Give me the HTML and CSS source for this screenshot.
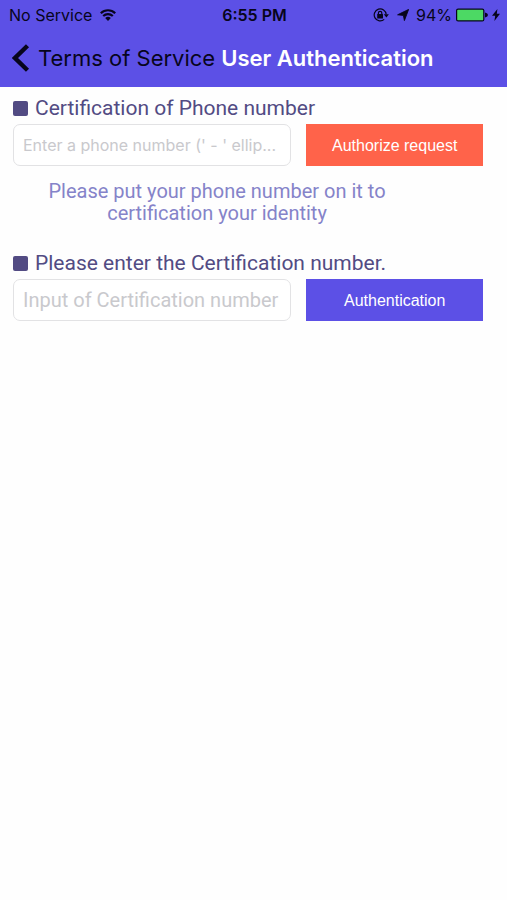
FILE: index.html
```html
<!DOCTYPE html>
<html lang="en">
<head>
<meta charset="utf-8">
<meta name="viewport" content="width=device-width, initial-scale=1">
<title>User Authentication</title>
<link rel="stylesheet" href="styles.css">
</head>
<body>
<header class="top">
  <div class="status">
    <div class="status-left">
      <span>No Service</span>
      <svg class="wifi" viewBox="0 0 16 12" aria-hidden="true">
        <path d="M.8 4.2a10.3 10.3 0 0 1 14.4 0M3.2 7a7 7 0 0 1 9.6 0" fill="none" stroke="currentColor" stroke-width="2.2"/>
        <path d="M5.2 9.1a4.2 4.2 0 0 1 5.6 0L8 12z" fill="currentColor"/>
      </svg>
    </div>
    <time class="clock">6:55 PM</time>
    <div class="status-right">
      <svg class="lock" viewBox="0 0 16 14" aria-hidden="true">
        <path d="M13.2 6.4a6 6 0 1 0-2 5" fill="none" stroke="currentColor" stroke-width="1.2"/>
        <path d="M10.8 6.2h5.1L13.4 9.6z" fill="currentColor"/>
        <rect x="4.2" y="6" width="5.8" height="4.4" rx=".5" fill="currentColor"/>
        <path d="M5.4 6.4V5a1.7 1.7 0 0 1 3.4 0v1.4" fill="none" stroke="currentColor" stroke-width="1.2"/>
      </svg>
      <svg class="arrow" viewBox="0 0 12 12" aria-hidden="true"><path d="M11.6.4L7.4 11.6 6.4 6.4.6 5.8z" fill="currentColor" stroke="currentColor" stroke-width=".9" stroke-linejoin="round"/></svg>
      <span>94%</span>
      <svg class="battery" viewBox="0 0 32 14" aria-hidden="true">
        <rect x=".6" y="1.1" width="27.2" height="11.8" rx="1.5" fill="#4cd964" stroke="currentColor" stroke-width="1.2"/>
        <path d="M29 4.5q3 .6 3 2.5t-3 2.5z" fill="currentColor"/>
      </svg>
      <svg class="bolt" viewBox="0 0 8 12" aria-hidden="true"><path d="M5.4 0L0 6.8h3.2L2.4 12 8 4.8H4.8z" fill="currentColor"/></svg>
    </div>
  </div>
  <nav class="nav">
    <a class="back" href="#">
      <svg class="chevron" viewBox="0 0 18 28" aria-hidden="true"><path d="M15.5 1.8L3 14l12.5 12.2" fill="none" stroke="currentColor" stroke-width="4.4"/></svg>
      <span>Terms of Service</span>
    </a>
    <h1 class="title">User Authentication</h1>
  </nav>
</header>
<main class="content">
  <form class="form">
    <label class="label" for="phone">Certification of Phone number</label>
    <div class="row">
      <input class="field field-small" id="phone" type="tel" placeholder="Enter a phone number (' - ' ellip...">
      <button class="button button-request" type="button">Authorize request</button>
    </div>
    <p class="hint">Please put your phone number on it to certification your identity</p>
    <label class="label" for="code">Please enter the Certification number.</label>
    <div class="row">
      <input class="field" id="code" type="text" placeholder="Input of Certification number">
      <button class="button button-confirm" type="button">Authentication</button>
    </div>
  </form>
</main>
</body>
</html>
```
FILE: styles.css
```css
* {
  box-sizing: border-box;
}

body {
  margin: 0;
  background: #fefefe;
  color: #524b83;
  font-family: Roboto, "Liberation Sans", sans-serif;
}

.top {
  background: #5c50e6;
  color: #07051c;
  font-family: Inter, "Liberation Sans", sans-serif;
}

.status {
  display: grid;
  grid-template-columns: 1fr auto 1fr;
  align-items: center;
  height: 30px;
  padding: 0 7px 0 9px;
  font-size: 16px;
  white-space: nowrap;
}

.status-left,
.status-right {
  display: flex;
  align-items: center;
}

.status-left {
  gap: 8px;
}

.status-right {
  justify-content: flex-end;
  gap: 4px;
}

.clock {
  font-weight: 600;
}

.wifi {
  width: 16px;
  height: 12px;
}

.lock {
  width: 16px;
  height: 14px;
}

.arrow {
  width: 12px;
  height: 12px;
  margin: 0 3px 0 4px;
}

.battery {
  width: 32px;
  height: 14px;
}

.bolt {
  width: 8px;
  height: 12px;
}

.nav {
  display: flex;
  align-items: center;
  gap: 6px;
  height: 57px;
  padding: 0 12px 2px;
  white-space: nowrap;
}

.back {
  display: flex;
  align-items: center;
  gap: 8px;
  color: inherit;
  font-size: 22px;
  text-decoration: none;
}

.chevron {
  width: 18px;
  height: 28px;
}

.title {
  margin: 0;
  color: #fff;
  font-size: 22px;
  font-weight: 600;
}

.content {
  padding: 8px 24px 24px 13px;
}

.label {
  display: flex;
  align-items: center;
  gap: 7px;
  font-size: 21px;
  line-height: 26px;
}

.label::before {
  content: "";
  width: 15px;
  height: 15px;
  border-radius: 2px;
  background: #524b83;
}

.row {
  display: grid;
  grid-template-columns: 279fr 177fr;
  gap: 15px;
  margin-top: 3px;
}

.field,
.button {
  width: 100%;
  min-width: 0;
  height: 42px;
}

.field {
  padding: 0 9px;
  border: 1px solid #e2e2e4;
  border-radius: 7px;
  background: #fff;
  color: #524b83;
  font-family: inherit;
  font-size: 20px;
}

.field-small {
  font-family: Inter, "Liberation Sans", sans-serif;
  font-size: 16px;
}

.field::placeholder {
  color: #c9c9cd;
}

.button {
  border: 0;
  padding: 2px 0 0;
  color: #fff;
  font-family: "Liberation Sans", Arial, sans-serif;
  font-size: 16px;
}

.button-request {
  background: #ff634a;
}

.button-confirm {
  background: #5c50e6;
}

.hint {
  max-width: 360px;
  margin: 14px 0 26px 24px;
  color: #8583c9;
  font-size: 20px;
  line-height: 22px;
  text-align: center;
}
```
